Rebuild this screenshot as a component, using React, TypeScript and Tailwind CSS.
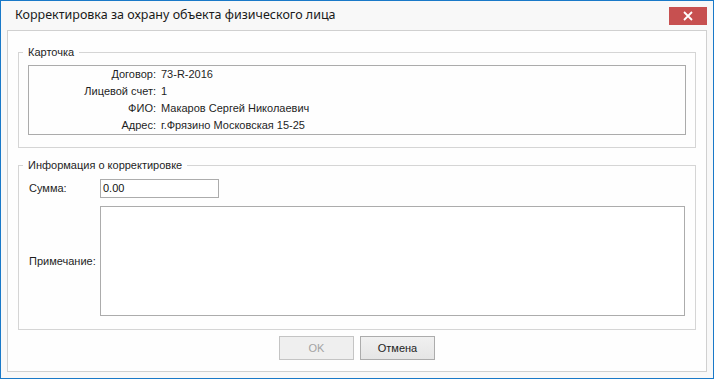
import React from 'react';

const rows = [
  { label: 'Договор:', value: '73-R-2016' },
  { label: 'Лицевой счет:', value: '1' },
  { label: 'ФИО:', value: 'Макаров Сергей Николаевич' },
  { label: 'Адрес:', value: 'г.Фрязино Московская 15-25' },
];

function CloseButton() {
  return (
    <div className="flex h-[18px] w-[38px] items-center justify-center bg-[#c75050]">
      <svg width="10" height="10" viewBox="0 0 10 10">
        <path d="M1 1L9 9M9 1L1 9" stroke="#ffffff" strokeWidth="1.8" />
      </svg>
    </div>
  );
}

function GroupBox({ title, className, children }: { title: string; className?: string; children: React.ReactNode }) {
  return (
    <div className={`relative mx-[10px] border border-[#d5d5d5] ${className ?? ''}`}>
      <div className="absolute left-[4px] top-[-8px] bg-[#fefefe] px-[5px] leading-[15px]">{title}</div>
      {children}
    </div>
  );
}

export default function App() {
  return (
    <div className="flex h-[379px] w-[714px] flex-col border border-[#1979c8] bg-[#f8f8f8] font-['Liberation_Sans',Arial,sans-serif] text-[11px] text-[#1e1e1e]">
      <div className="flex h-[29px] shrink-0 items-start justify-between pl-[14px] pr-[6px]">
        <div className="mt-[4px] font-['Noto_Sans',sans-serif] text-[12.5px] leading-[20px] text-[#1a1a1a]">
          Корректировка за охрану объекта физического лица
        </div>
        <div className="mt-[6px]">
          <CloseButton />
        </div>
      </div>
      <div className="mx-[6px] mb-[6px] flex flex-1 flex-col border border-[#d0d0d0] bg-[#fefefe]">
        <GroupBox title="Карточка" className="mt-[21px] px-[9px] pt-[12px] pb-[12px]">
          <div className="border border-[#ababab]">
            {rows.map((r) => (
              <div key={r.label} className="grid h-[17px] grid-cols-[127px_1fr] items-center gap-x-[5px] leading-[17px]">
                <div className="text-right">{r.label}</div>
                <div>{r.value}</div>
              </div>
            ))}
          </div>
        </GroupBox>
        <GroupBox title="Информация о корректировке" className="mt-[17px] px-[10px] pt-[13px] pb-[13px]">
          <div className="grid grid-cols-[71px_1fr] items-center gap-y-[8px]">
            <div>Сумма:</div>
            <div className="flex h-[19px] w-[119px] items-center border border-[#acacac] bg-white px-[2px] text-[#111]">0.00</div>
            <div>Примечание:</div>
            <div className="h-[110px] border border-[#acacac] bg-white" />
          </div>
        </GroupBox>
        <div className="mt-[6px] flex justify-center gap-[6px]">
          <div className="flex h-[24px] w-[75px] items-center justify-center border border-[#c4c4c4] bg-[#efefef] text-[#a3a3a3]">
            OK
          </div>
          <div className="flex h-[24px] w-[75px] items-center justify-center border border-[#acacac] bg-gradient-to-b from-[#f0f0f0] to-[#e5e5e5] text-[#1e1e1e]">
            Отмена
          </div>
        </div>
      </div>
    </div>
  );
}
